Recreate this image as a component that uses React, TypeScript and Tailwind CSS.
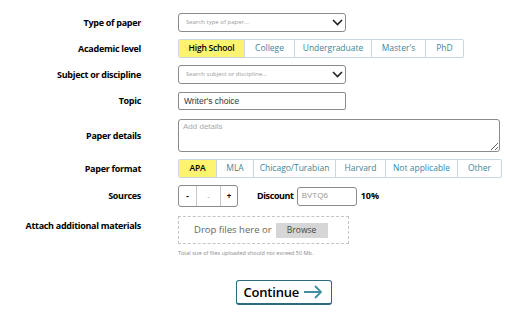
import React from "react";

const font = { fontFamily: '"Open Sans", "Noto Sans", sans-serif' };

function Label({ children, className = "" }: { children: React.ReactNode; className?: string }) {
  return (
    <div className={`w-[141px] shrink-0 text-right text-[9px] font-bold tracking-[-0.3px] text-black ${className}`}>{children}</div>
  );
}

function Chevron() {
  return (
    <svg width="11" height="7" viewBox="0 0 11 7" className="mr-[2px]">
      <path d="M1 1 L5.5 5.5 L10 1" fill="none" stroke="#222" strokeWidth="1.6" />
    </svg>
  );
}

function Segmented({ items, widths }: { items: string[]; widths: number[] }) {
  return (
    <div className="flex h-[19px] rounded-[2px] border border-[#c9d8de]">
      {items.map((it, i) => (
        <div
          key={it}
          style={{ width: widths[i] }}
          className={`flex items-center justify-center text-[8.5px] ${
            i === 0 ? "bg-[#fcf36e] font-semibold tracking-[-0.2px] text-black" : "border-l border-[#c9d8de] text-[#3f8696]"
          }`}
        >
          {it}
        </div>
      ))}
    </div>
  );
}

export default function App() {
  return (
    <div className="relative h-[322px] w-[512px] overflow-hidden bg-white" style={font}>
      <div className="flex flex-col pt-[13px]">
        <div className="flex h-[19px] items-center">
          <Label>Type of paper</Label>
          <div className="ml-[37px] flex h-[19px] w-[168px] items-center justify-between rounded-[3px] border border-[#8a8a8a] pl-[7px]">
            <span className="text-[6px] text-[#999]">Search type of paper...</span>
            <Chevron />
          </div>
        </div>
        <div className="mt-[7px] flex items-center">
          <Label>Academic level</Label>
          <div className="ml-[37px]">
            <Segmented items={["High School", "College", "Undergraduate", "Master's", "PhD"]} widths={[65, 50, 77, 54, 38]} />
          </div>
        </div>
        <div className="mt-[7px] flex h-[19px] items-center">
          <Label>Subject or discipline</Label>
          <div className="ml-[37px] flex h-[19px] w-[168px] items-center justify-between rounded-[3px] border border-[#8a8a8a] pl-[7px]">
            <span className="text-[6px] text-[#999]">Search subject or discipline...</span>
            <Chevron />
          </div>
        </div>
        <div className="mt-[8px] flex h-[18px] items-center">
          <Label>Topic</Label>
          <div className="ml-[37px] flex h-[18px] w-[168px] items-center rounded-[2px] border border-[#8a8a8a] pl-[5px]">
            <span className="text-[8.5px] text-[#333]" style={{ fontFamily: '"Liberation Sans", sans-serif' }}>Writer's choice</span>
          </div>
        </div>
        <div className="mt-[9px] flex h-[33px] items-center">
          <Label>Paper details</Label>
          <textarea
            readOnly
            placeholder="Add details"
            className="ml-[37px] h-[33px] w-[322px] rounded-[3px] border border-[#8a8a8a] px-[4px] py-[2px] text-[8px] leading-[10px] outline-none placeholder:text-[#aaa]"
            style={{ fontFamily: '"Liberation Sans", sans-serif' }}
          />
        </div>
        <div className="mt-[7px] flex items-center">
          <Label>Paper format</Label>
          <div className="ml-[37px]">
            <Segmented
              items={["APA", "MLA", "Chicago/Turabian", "Harvard", "Not applicable", "Other"]}
              widths={[37, 37, 82, 50, 72, 44]}
            />
          </div>
        </div>
        <div className="mt-[7px] flex h-[22px] items-center">
          <Label>Sources</Label>
          <div className="ml-[37px] flex h-[22px] w-[60px] rounded-[3px] border border-[#8a8a8a] text-[8px] font-bold">
            <div className="flex w-[17px] items-center justify-center">-</div>
            <div className="flex w-[25px] items-center justify-center border-x border-[#c9c9c9] font-normal text-[#999]">-</div>
            <div className="flex flex-1 items-center justify-center">+</div>
          </div>
          <div className="ml-[19px] text-[9px] font-bold tracking-[-0.4px]">Discount</div>
          <div className="ml-[3px] flex h-[19px] w-[60px] items-center rounded-[3px] border border-[#8a8a8a] pl-[4px]">
            <span className="text-[8px] text-[#999]" style={{ fontFamily: '"Liberation Sans", sans-serif' }}>BVTQ6</span>
          </div>
          <div className="ml-[4px] text-[9px] font-bold">10%</div>
        </div>
        <div className="mt-[9px] flex items-start">
          <Label className="mt-[3px]">Attach additional materials</Label>
          <div className="ml-[37px] flex flex-col">
            <div className="flex h-[28px] w-[171px] items-center border border-dashed border-[#c4c4c4] pl-[15px]">
              <span className="text-[9.5px] text-[#666]">Drop files here or</span>
              <div className="ml-[4px] flex h-[15px] w-[52px] items-center justify-center bg-[#d6d6d6] text-[8.5px] text-[#444]">Browse</div>
            </div>
            <div className="mt-[5px] text-[5.5px] text-[#888]">Total size of files uploaded should not exceed 50 Mb.</div>
          </div>
        </div>
        <div className="mt-[23px] flex justify-center pl-[55px]">
          <div className="flex h-[25px] w-[96px] items-center justify-between rounded-[3px] border border-b-2 border-[#2c6a80] pl-[7px] pr-[8px]">
            <span className="text-[13px] font-semibold tracking-[-0.2px] text-black">Continue</span>
            <svg width="20" height="14" viewBox="0 0 20 14">
              <path d="M1 7 H18 M12 1 L18 7 L12 13" fill="none" stroke="#3f8fa0" strokeWidth="1.8" />
            </svg>
          </div>
        </div>
      </div>
    </div>
  );
}
